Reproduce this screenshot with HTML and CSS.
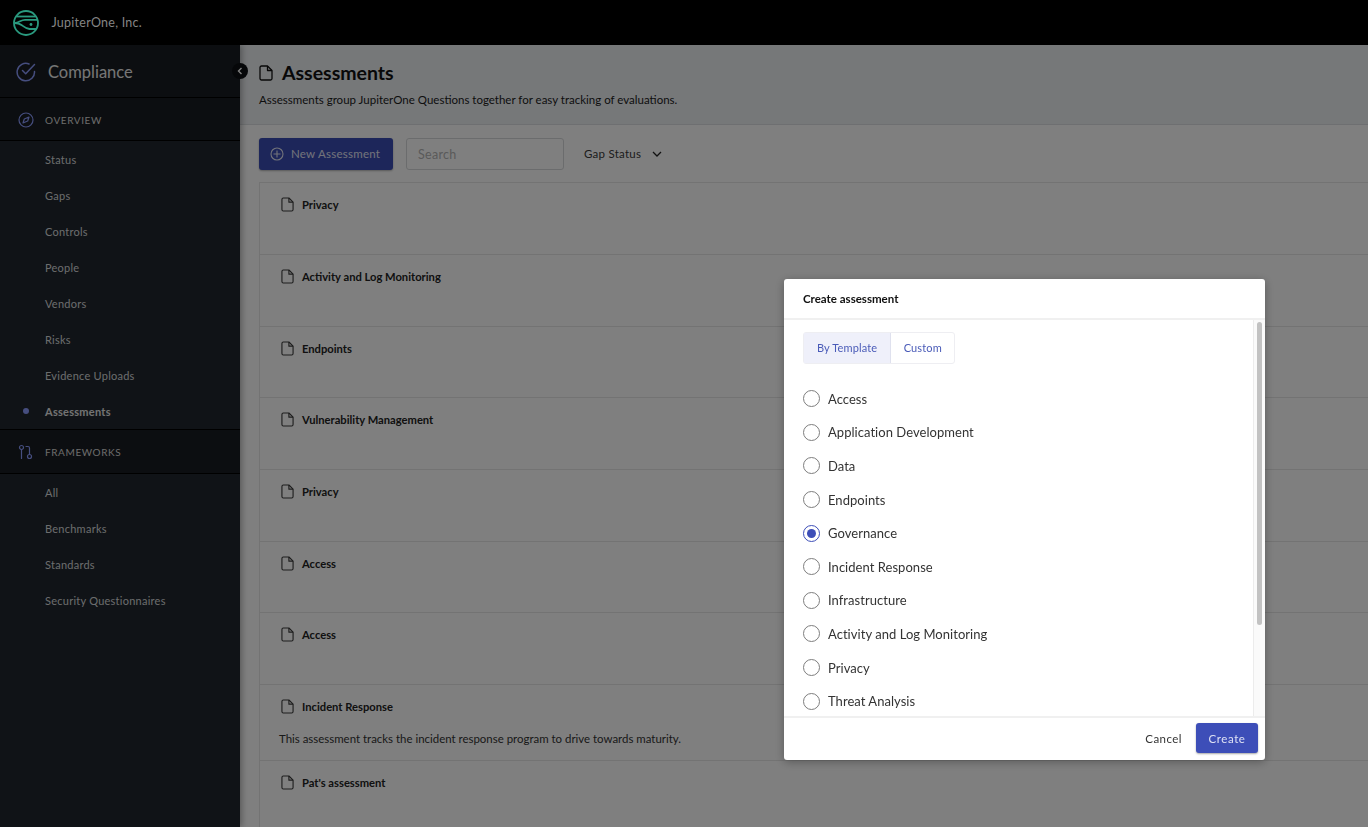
FILE: index.html
```html
<!DOCTYPE html>
<html lang="en-US">
  <head>
    <title>Assessments</title>
    <link rel="stylesheet" href="styles.css">
  </head>
  <body>
    <header class="topbar">
      <svg class="logo" width="28" height="28" viewBox="0 0 28 28" fill="none" stroke="#2a9a7f" stroke-width="1.800">
        <circle cx="14" cy="14" r="12"></circle>
        <path d="M4.500 7.500h19"></path>
        <path d="M2.500 14c5 0 6-3.200 10.500-3.200h12"></path>
        <path d="M2.500 14c4 0 5 .5 7 2 2 1.500 4 3.500 8 4h7"></path>
        <circle cx="19" cy="15.500" r="1.400" fill="#2a9a7f" stroke="none"></circle>
      </svg>
      <span class="org">JupiterOne, Inc.</span>
    </header>

    <div class="layout">
      <nav class="sidebar">
        <div class="app-title">
          <svg width="20" height="20" viewBox="0 0 20 20" fill="none" stroke="#8c9cff" stroke-width="1.500" stroke-linecap="round" stroke-linejoin="round">
            <path d="M18.500 9.500A8.700 8.700 0 1 1 13 2"></path>
            <path d="M6.500 8.500l3.200 3.200L18.500 2.500"></path>
          </svg>
          <span>Compliance</span>
        </div>
        <div class="nav-head">
          <svg width="16" height="16" viewBox="0 0 16 16" fill="none" stroke="#8c9cff" stroke-width="1.200" stroke-linejoin="round">
            <circle cx="8" cy="8" r="7"></circle>
            <path d="M11 5l-1.300 4L5 11l1.300-4z"></path>
          </svg>
          <span>OVERVIEW</span>
        </div>
        <a class="nav-item">Status</a>
        <a class="nav-item">Gaps</a>
        <a class="nav-item">Controls</a>
        <a class="nav-item">People</a>
        <a class="nav-item">Vendors</a>
        <a class="nav-item">Risks</a>
        <a class="nav-item">Evidence Uploads</a>
        <a class="nav-item active"><i class="dot"></i>Assessments</a>
        <div class="nav-head">
          <svg width="16" height="16" viewBox="0 0 16 16" fill="none" stroke="#8c9cff" stroke-width="1.200" stroke-linecap="round">
            <circle cx="3.500" cy="3.500" r="2"></circle>
            <circle cx="11.500" cy="12.500" r="2"></circle>
            <path d="M3.500 5.500V14.500"></path>
            <path d="M8 2.500h2c1 0 1.500.7 1.500 1.500v6.500"></path>
          </svg>
          <span>FRAMEWORKS</span>
        </div>
        <a class="nav-item">All</a>
        <a class="nav-item">Benchmarks</a>
        <a class="nav-item">Standards</a>
        <a class="nav-item">Security Questionnaires</a>
        <button class="collapse">
          <svg width="8" height="8" viewBox="0 0 8 8" fill="none" stroke="#fff" stroke-width="1.400"><path d="M5.500 1L2.500 4l3 3"></path></svg>
        </button>
      </nav>

      <main class="content">
        <div class="page-head">
          <h1>
            <svg width="14" height="16" viewBox="0 0 14 16" fill="none" stroke="#111" stroke-width="1.300" stroke-linejoin="round">
              <path d="M2.500 1H8.500L13 5.500V13.500a1.500 1.500 0 0 1-1.500 1.500h-9A1.500 1.500 0 0 1 1 13.500v-11A1.500 1.500 0 0 1 2.500 1z"></path>
              <path d="M8.500 1V5.500H13"></path>
            </svg>
            Assessments
          </h1>
          <p>Assessments group JupiterOne Questions together for easy tracking of evaluations.</p>
        </div>

        <div class="toolbar">
          <button class="btn-new">
            <svg width="14" height="14" viewBox="0 0 14 14" fill="none" stroke="#e4e6f4" stroke-width="1.100"><circle cx="7" cy="7" r="6"></circle><path d="M7 3.500v7M3.500 7h7"></path></svg>
            New Assessment
          </button>
          <input class="search" type="text" placeholder="Search">
          <div class="gap-status">
            Gap Status
            <svg width="10" height="6" viewBox="0 0 10 6" fill="none" stroke="#222" stroke-width="1.300"><path d="M1 1l4 4 4-4"></path></svg>
          </div>
        </div>

        <section class="list">
          <div class="row"><div class="row-title"><svg class="doc" viewBox="0 0 14 16"><use href="#doc"></use></svg>Privacy</div></div>
          <div class="row"><div class="row-title"><svg class="doc" viewBox="0 0 14 16"><use href="#doc"></use></svg>Activity and Log Monitoring</div></div>
          <div class="row"><div class="row-title"><svg class="doc" viewBox="0 0 14 16"><use href="#doc"></use></svg>Endpoints</div></div>
          <div class="row"><div class="row-title"><svg class="doc" viewBox="0 0 14 16"><use href="#doc"></use></svg>Vulnerability Management</div></div>
          <div class="row"><div class="row-title"><svg class="doc" viewBox="0 0 14 16"><use href="#doc"></use></svg>Privacy</div></div>
          <div class="row"><div class="row-title"><svg class="doc" viewBox="0 0 14 16"><use href="#doc"></use></svg>Access</div></div>
          <div class="row"><div class="row-title"><svg class="doc" viewBox="0 0 14 16"><use href="#doc"></use></svg>Access</div></div>
          <div class="row row-desc">
            <div class="row-title"><svg class="doc" viewBox="0 0 14 16"><use href="#doc"></use></svg>Incident Response</div>
            <p>This assessment tracks the incident response program to drive towards maturity.</p>
          </div>
          <div class="row"><div class="row-title"><svg class="doc" viewBox="0 0 14 16"><use href="#doc"></use></svg>Pat's assessment</div></div>
        </section>
      </main>
    </div>

    <svg width="0" height="0" class="defs">
      <g id="doc" fill="none" stroke="#3a3a3a" stroke-width="1.200" stroke-linejoin="round">
        <path d="M2.500 1H8.500L13 5.500V13.500a1.500 1.500 0 0 1-1.500 1.500h-9A1.500 1.500 0 0 1 1 13.500v-11A1.500 1.500 0 0 1 2.500 1z"></path>
        <path d="M8.500 1V5.500H13"></path>
      </g>
    </svg>

    <div class="overlay"></div>

    <div class="modal">
      <div class="modal-head">Create assessment</div>
      <div class="modal-body">
        <div class="tabs">
          <div class="tab selected">By Template</div>
          <div class="tab">Custom</div>
        </div>
        <ul class="options">
          <li><i class="radio"></i>Access</li>
          <li><i class="radio"></i>Application Development</li>
          <li><i class="radio"></i>Data</li>
          <li><i class="radio"></i>Endpoints</li>
          <li><i class="radio checked"></i>Governance</li>
          <li><i class="radio"></i>Incident Response</li>
          <li><i class="radio"></i>Infrastructure</li>
          <li><i class="radio"></i>Activity and Log Monitoring</li>
          <li><i class="radio"></i>Privacy</li>
          <li><i class="radio"></i>Threat Analysis</li>
        </ul>
        <div class="scroll-track"><div class="scroll-thumb"></div></div>
      </div>
      <div class="modal-foot">
        <button class="btn-cancel">Cancel</button>
        <button class="btn-create">Create</button>
      </div>
    </div>
  </body>
</html>
```

FILE: styles.css
```css
* {
  box-sizing: border-box;
}

html, body {
  height: 100%;
}

body {
  margin: 0;
  overflow: hidden;
  font-family: Lato, "Liberation Sans", sans-serif;
  background-color: #fff;
  color: #222;
}

.defs {
  position: absolute;
}

.topbar {
  height: 45px;
  background-color: #000;
  display: flex;
  align-items: center;
  padding-left: 11.500px;
  position: relative;
  z-index: 2;
}

.org {
  margin-left: 12px;
  font-size: 12.500px;
  letter-spacing: .25px;
  color: #858585;
}

.layout {
  display: flex;
  height: calc(100% - 45px);
}

/* sidebar */
.sidebar {
  width: 240px;
  flex-shrink: 0;
  background-color: #20272e;
  position: relative;
  box-shadow: 2px 0 6px rgba(0, 0, 0, .3);
}

.app-title {
  height: 53px;
  display: flex;
  align-items: center;
  padding: 2px 0 0 16px;
  gap: 12px;
  background-color: #181d22;
  border-bottom: 1px solid #000;
  font-size: 16.500px;
  color: #ececec;
}

.nav-head {
  height: 45px;
  display: flex;
  align-items: center;
  gap: 11px;
  padding: 1px 0 0 18px;
  background-color: #181d22;
  border-bottom: 1px solid #000;
  border-top: 1px solid #000;
  font-size: 10px;
  letter-spacing: .6px;
  color: #d8d8d8;
}

.app-title + .nav-head {
  border-top: none;
  height: 43px;
}

.nav-item {
  height: 36px;
  display: flex;
  align-items: center;
  padding-left: 45px;
  font-size: 11px;
  letter-spacing: .25px;
  color: #d8dadc;
  position: relative;
}

.nav-item.active {
  font-weight: 700;
  color: #e6e6e6;
}

.dot {
  width: 6px;
  height: 6px;
  border-radius: 50%;
  background-color: #8c9cff;
  position: absolute;
  left: 23px;
}

.collapse {
  position: absolute;
  top: 18px;
  right: -8px;
  width: 16px;
  height: 16px;
  padding: 0;
  border: none;
  border-radius: 50%;
  background-color: #0c0f12;
  display: flex;
  align-items: center;
  justify-content: center;
}

/* main content */
.content {
  flex: 1;
  min-width: 0;
}

.page-head {
  height: 80px;
  background-color: #edf0f3;
  border-bottom: 1px solid #dcdfe2;
  padding: 14px 19px 0;
}

.page-head h1 {
  margin: 0;
  display: flex;
  align-items: center;
  gap: 9px;
  font-size: 19.500px;
  line-height: 27px;
  font-weight: 700;
  color: #111;
}

.page-head p {
  margin: 6px 0 0;
  font-size: 11.500px;
  line-height: 16px;
  color: #1c1c1c;
}

.toolbar {
  height: 57.300px;
  display: flex;
  align-items: flex-start;
  padding: 13px 0 0 19px;
}

.btn-new {
  width: 134px;
  height: 32px;
  display: flex;
  align-items: center;
  gap: 7px;
  padding: 0 0 1px 11px;
  border: none;
  border-radius: 3px;
  background-color: #3a4cb4;
  box-shadow: 0 1px 2px rgba(0, 0, 0, .3);
  font: 11.500px Lato, sans-serif;
  letter-spacing: .25px;
  color: #e4e6f4;
}

.search {
  width: 158px;
  height: 32px;
  margin-left: 13px;
  padding: 0 11px;
  border: 1px solid #d6d8da;
  border-radius: 3px;
  background-color: #fff;
  font: 12.500px Lato, sans-serif;
  letter-spacing: .3px;
  outline: none;
}

.search::placeholder {
  color: #b4b4b4;
}

.gap-status {
  margin-left: 20px;
  height: 31px;
  display: flex;
  align-items: center;
  gap: 11px;
  font-size: 11.500px;
  letter-spacing: .25px;
  color: #3a3a3a;
}

.list {
  margin-left: 19px;
  border-top: 1px solid #e6e6e6;
  border-left: 1px solid #e6e6e6;
}

.row {
  height: 71.700px;
  border-bottom: 1px solid #e6e6e6;
  padding: 13px 20px 0;
  overflow: hidden;
}

.row-desc {
  height: 76px;
}

.row-title {
  display: flex;
  align-items: center;
  height: 17px;
  gap: 8px;
  margin-left: 1px;
  font-size: 11.200px;
  font-weight: 700;
  color: #222;
}

.row p {
  margin: 16px 0 0 -1px;
  font-size: 11.450px;
  line-height: 16px;
  color: #333;
}

.doc {
  width: 13px;
  height: 15px;
  flex-shrink: 0;
}

/* dim layer and dialog */
.overlay {
  position: fixed;
  top: 0;
  left: 0;
  right: 0;
  bottom: 0;
  background-color: rgba(0, 0, 0, .5);
}

.modal {
  position: fixed;
  left: 784px;
  top: 279px;
  width: 481px;
  height: 481px;
  display: flex;
  flex-direction: column;
  background-color: #fff;
  border-radius: 3px;
  box-shadow: 0 2px 10px rgba(0, 0, 0, .3);
  overflow: hidden;
}

.modal-head {
  height: 41px;
  flex-shrink: 0;
  display: flex;
  align-items: center;
  padding: 0 19px;
  border-bottom: 2px solid #f0f0f0;
  font-size: 11.500px;
  font-weight: 700;
  color: #111;
}

.modal-body {
  flex: 1;
  min-height: 0;
  overflow: hidden;
  padding: 12px 19px 0;
  position: relative;
}

/* scrollbars are not drawn by the browser here, so the bar is its own element */
.scroll-track {
  position: absolute;
  top: 0;
  right: 0;
  bottom: 0;
  width: 12px;
  padding: 2px 3px;
  background-color: #fafafa;
  border-left: 1px solid #ececec;
}

.scroll-thumb {
  height: 303px;
  border-radius: 3px;
  background-color: #c2c2c2;
}

.tabs {
  display: inline-flex;
  height: 32px;
  border: 1px solid #eeeef2;
  border-radius: 3px;
}

.tab {
  padding: 0 12.500px 2px 13px;
  display: flex;
  align-items: center;
  font-size: 11px;
  letter-spacing: .13px;
  color: #4a5bb8;
}

.tab.selected {
  background-color: #eff0fa;
  border-right: 1px solid #dfe1ee;
}

.options {
  list-style: none;
  margin: 18px 0 0;
  padding: 0;
}

.options li {
  height: 33.600px;
  display: flex;
  align-items: center;
  gap: 8px;
  font-size: 13px;
  letter-spacing: .04px;
  color: #333;
}

.radio {
  width: 17px;
  height: 17px;
  border: 1.500px solid #7e7e7e;
  border-radius: 50%;
  flex-shrink: 0;
  display: flex;
  align-items: center;
  justify-content: center;
}

.radio.checked {
  border-color: #3d4eb8;
}

.radio.checked::after {
  content: "";
  width: 9px;
  height: 9px;
  border-radius: 50%;
  background-color: #3d4eb8;
}

.modal-foot {
  height: 44px;
  flex-shrink: 0;
  display: flex;
  align-items: flex-start;
  justify-content: flex-end;
  padding: 5px 7px 0 0;
  border-top: 2px solid #f0f0f0;
}

.btn-cancel {
  height: 30px;
  border: none;
  background: none;
  padding: 0;
  margin-right: 14px;
  font: 11.500px Lato, sans-serif;
  letter-spacing: .45px;
  color: #333;
}

.btn-create {
  width: 62px;
  height: 30px;
  border: none;
  border-radius: 3px;
  background-color: #3d4eb8;
  box-shadow: 0 1px 2px rgba(0, 0, 0, .35);
  font: 11.500px Lato, sans-serif;
  letter-spacing: .6px;
  color: #dfe2f4;
}
```
